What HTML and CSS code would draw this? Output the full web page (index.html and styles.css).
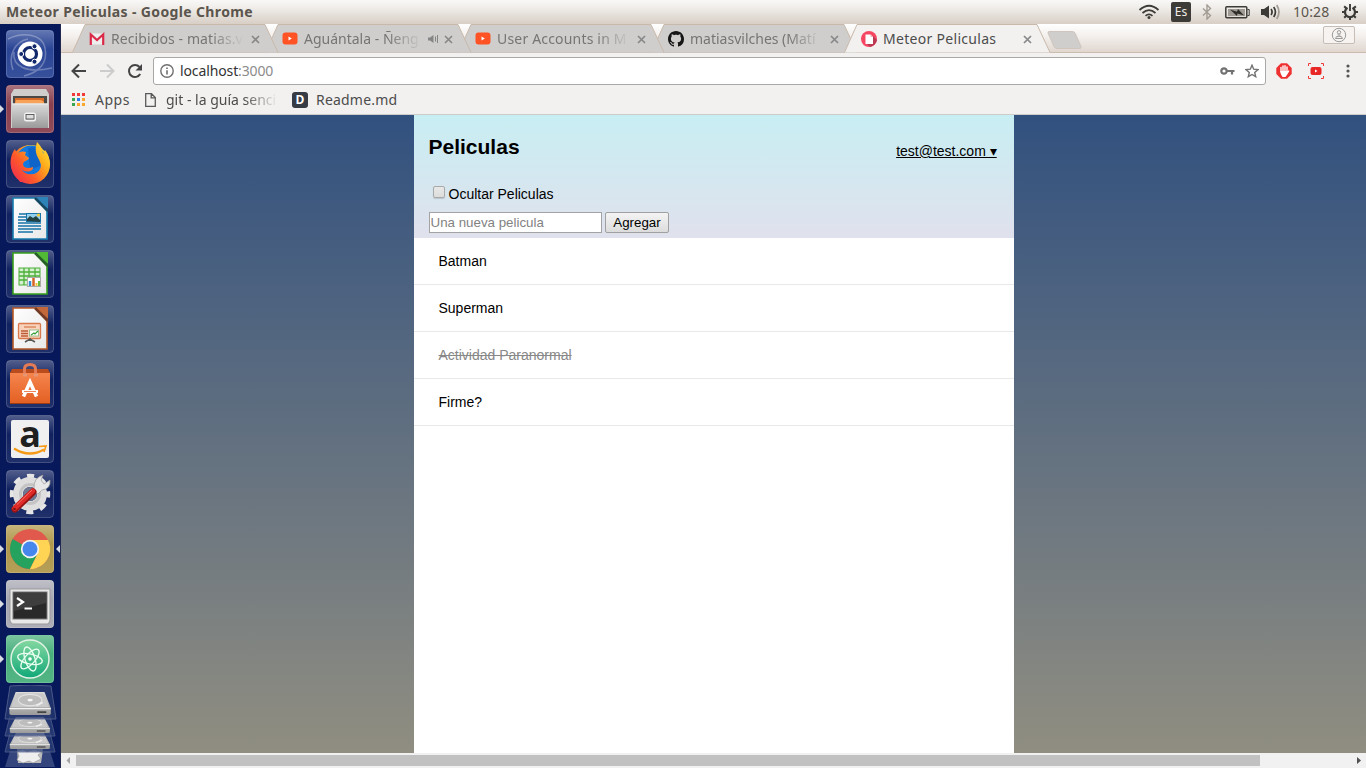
FILE: index.html
```html
<!DOCTYPE html>
<html lang="es">
<head>
<meta charset="utf-8">
<title>Meteor Peliculas</title>
<link rel="stylesheet" href="styles.css">
</head>
<body>
<svg class="defs" width="0" height="0">
  <defs>
    <linearGradient id="glass" x1="0" y1="0" x2="0" y2="1"><stop offset="0" stop-color="#fff" stop-opacity=".3"/><stop offset=".4" stop-color="#fff" stop-opacity=".04"/><stop offset="1" stop-color="#fff" stop-opacity=".1"/></linearGradient>
    <linearGradient id="paper" x1="0" y1="0" x2="1" y2="1"><stop offset="0" stop-color="#fff"/><stop offset="1" stop-color="#e8e8e8"/></linearGradient>
    <linearGradient id="steel" x1="0" y1="0" x2="0" y2="1"><stop offset="0" stop-color="#dcdcdc"/><stop offset="1" stop-color="#9a9a9a"/></linearGradient>
    <linearGradient id="bag" x1="0" y1="0" x2="0" y2="1"><stop offset="0" stop-color="#f5854e"/><stop offset="1" stop-color="#e35f22"/></linearGradient>
    <linearGradient id="fox" x1="1" y1="0" x2="0" y2=".8"><stop offset="0" stop-color="#fff04a"/><stop offset=".35" stop-color="#ffb01c"/><stop offset=".7" stop-color="#ff5a2a"/><stop offset="1" stop-color="#f0304c"/></linearGradient>
    <linearGradient id="atom" x1="0" y1="0" x2="0" y2="1"><stop offset="0" stop-color="#86d8a0"/><stop offset="1" stop-color="#10a878"/></linearGradient>
    <g id="frame"><rect x=".5" y=".5" width="47" height="47" rx="3.5" fill="url(#glass)" stroke="#fff" stroke-opacity=".2"/></g>
    <g id="close"><path d="M1 1l7 7M8 1l-7 7" fill="none" stroke="#888" stroke-width="1.7"/></g>
    <g id="tabshape"><path d="M.5 28.5L13 .5H193L206 28.5"/></g>
    <g id="youtube"><rect x=".5" y="1.500" width="15" height="12" rx="3" fill="#ff5225"/><path d="M6.500 5.500v4L9.800 7.500z" fill="#fff"/></g>
    <g id="drive"><path d="M8 0H40L47 14V19Q47 20 45 20H3Q1 20 1 19V14Z" fill="url(#steel)"/><path d="M9 1H39L45 13H3Z" fill="#c9c9c9"/><ellipse cx="24" cy="7" rx="13" ry="5" fill="#bdbdbd" stroke="#e2e2e2"/><ellipse cx="24" cy="7" rx="3" ry="1.2" fill="#f5f5f5"/><path d="M31 12l7-3" stroke="#eee" stroke-width="1.5"/><path d="M1 14.500H47" stroke="#f2f2f2"/><path d="M32 17.500h10" stroke="#444" stroke-width="1.500"/></g>
  </defs>
</svg>

<div class="desktop">
  <header class="panel">
    <span class="panel-title">Meteor Peliculas - Google Chrome</span>
    <div class="tray">
      <svg class="wifi" width="22" height="16" viewBox="0 0 22 16" fill="none" stroke="#3c3b37" stroke-width="1.7"><path d="M1.500 6Q11-2.500 20.500 6M4.500 9Q11 3.200 17.500 9M7.500 11.800Q11 8.800 14.500 11.800"/><circle cx="11" cy="13.500" r="1.500" fill="#3c3b37" stroke="none"/></svg>
      <span class="lang">Es</span>
      <svg class="bt" width="10" height="16" viewBox="0 0 10 16" fill="none" stroke="#a19b93" stroke-width="1.400"><path d="M1 4.500L8.500 11.500 5 15V1L8.500 4.500 1 11.500"/></svg>
      <svg class="battery" width="25" height="13" viewBox="0 0 25 13"><rect x=".8" y=".8" width="21" height="11" rx="1" fill="none" stroke="#3c3b37" stroke-width="1.500"/><rect x="3" y="3" width="17" height="7" fill="#a09b94"/><path d="M22.500 3.500h1.700v6h-1.700" fill="none" stroke="#3c3b37"/><path d="M5 3.500l7 2.200 1-2.700 6 6.500-6.500-2-.5 2.500z" fill="#2d2c29"/></svg>
      <svg class="volume" width="20" height="16" viewBox="0 0 20 16" fill="none" stroke="#3c3b37" stroke-width="1.700"><path d="M0 5h3L8 1.500v13L3 11H0z" fill="#3c3b37" stroke="none"/><path d="M10 5q2.200 3 0 6M12.700 3q3.500 5 0 10"/><path d="M15.700 1q4.500 7 0 14" stroke="#a19b93"/></svg>
      <span class="clock">10:28</span>
      <svg class="power" width="18" height="18" viewBox="0 0 18 18" fill="none" stroke="#3c3b37"><path d="M6.500 4.800A5 5 0 1 0 11.500 4.800" stroke-width="2.200"/><path d="M9 1v7" stroke-width="1.900"/><path d="M3.200 3.200l2 2M14.800 3.200l-2 2M1 9h3M14 9h3M3.200 14.800l2-2M14.800 14.800l-2-2M9 14v3" stroke-width="2"/></svg>
    </div>
  </header>

  <div class="workspace">
    <nav class="launcher">
      <div class="app dash"><svg width="48" height="48"><g fill="none" stroke="#fff" opacity=".28" stroke-width="1.600"><path d="M2 9C16 2 36 3 39 18 42 32 34 42 18 46"/><path d="M7 40C2 26 8 12 22 9"/><path d="M8 22C6 36 20 44 46 38"/></g><use href="#frame"/><circle cx="24" cy="24" r="12.500" fill="#fff"/><circle cx="24" cy="24" r="6.500" fill="none" stroke="#11296a" stroke-width="3.200"/><g fill="#11296a" stroke="#fff" stroke-width="1"><circle cx="15.200" cy="24" r="2.500"/><circle cx="28.500" cy="16.300" r="2.500"/><circle cx="28.500" cy="31.700" r="2.500"/></g></svg></div>
      <div class="app files running"><svg width="48" height="48"><use href="#frame"/><path d="M8 4H40L43 9V43H5V9Z" fill="#cfcecd"/><path d="M7 11H41V22H7Z" fill="#4b4945"/><path d="M9 13H38V19H9Z" fill="#d96b28"/><path d="M10 15H35L38 17V19H9Z" fill="#f7a45a"/><path d="M6 18.500H42V43H6Z" fill="url(#steel)"/><path d="M6 19H42" stroke="#eee"/><rect x="19" y="28.500" width="10" height="7" rx="1.500" fill="#999" stroke="#f2f2f2" stroke-width="2"/><rect x="20" y="29.500" width="8" height="4.500" fill="#ddd" stroke="#555" stroke-width=".9"/></svg></div>
      <div class="app"><svg width="48" height="48"><use href="#frame"/><circle cx="24.500" cy="24.500" r="19.500" fill="url(#fox)"/><circle cx="25" cy="20" r="14.500" fill="#1479df"/><path d="M22 8q9-3 13 5l-1 13-10 4z" fill="#0a57b9" opacity=".6"/><path d="M9 9L11 14C14 11 17 11 20 12L19 15 23 18C22 21 18 20 17 24 17 28 22 29 27 27 28 31 20 34 15 29 22 39 35 34 35 25 34 18 27 15 31 2 34 5 37 9 37 14L39 10C43 15 45 22 43 29L32 42H14L6 30C3 22 5 14 9 9Z" fill="url(#fox)"/></svg></div>
      <div class="app"><svg width="48" height="48"><use href="#frame"/><path d="M7 3H29L41 16V44H7Z" fill="url(#paper)" stroke="#177cae" stroke-width="1.600"/><path d="M28 2H42V14Z" fill="#2d83b8"/><path d="M29 3L42 16" stroke="#174963" stroke-width="2.500"/><path d="M13 19H20M12 22H20M12 25H20M12 28H35M12 31H35M12 34H35M12 37H27" stroke="#1473a9" stroke-width="1.600"/><rect x="20.500" y="18.500" width="14" height="8" fill="#91cfec" stroke="#1874a7"/><path d="M21 26V24l3-3 3 2 3-2 4 4v2z" fill="#244142"/><circle cx="32.500" cy="20" r="1.500" fill="#ffc82a"/></svg></div>
      <div class="app"><svg width="48" height="48"><use href="#frame"/><path d="M7 3H29L41 16V44H7Z" fill="url(#paper)" stroke="#38a11c" stroke-width="1.600"/><path d="M28 2H42V14Z" fill="#51b936"/><path d="M29 3L42 16" stroke="#286127" stroke-width="2.500"/><rect x="13" y="18" width="21" height="17" fill="#d4f0cf" stroke="#4cae39"/><path d="M13 22H34M13 26H34M13 30H34M18 18V35M23 18V35M29 18V35" stroke="#4cae39" stroke-width="1.300"/><rect x="21.500" y="27.500" width="13" height="9" fill="#fff" stroke="#aaa"/><path d="M24 36V31" stroke="#348dd1" stroke-width="2.500"/><path d="M27.500 36V28" stroke="#d76423" stroke-width="2.500"/><path d="M30.500 36V33" stroke="#f2c337" stroke-width="2"/><path d="M33 36V31" stroke="#6ab83f" stroke-width="2"/></svg></div>
      <div class="app"><svg width="48" height="48"><use href="#frame"/><path d="M7 3H29L41 16V44H7Z" fill="url(#paper)" stroke="#b65825" stroke-width="1.600"/><path d="M28 2H42V14Z" fill="#c3683a"/><path d="M29 3L42 16" stroke="#733b25" stroke-width="2.500"/><rect x="12.500" y="18.500" width="22" height="15" rx="1" fill="#f9d2bb" stroke="#d9794d" stroke-width="1.300"/><path d="M18 22H30" stroke="#cf6637"/><path d="M15 26h7M15 28.500h7M15 31h7" stroke="#ba5d3a" stroke-width="1.300"/><rect x="23.500" y="25" width="9" height="6" fill="#fff" stroke="#9bbf8e"/><path d="M25 30l3-2 1 1 3-3" fill="none" stroke="#3b9f38" stroke-width="1.200"/><path d="M19 37l5-3 5 3M24 33v3" fill="none" stroke="#555" stroke-width="1.500"/></svg></div>
      <div class="app"><svg width="48" height="48"><use href="#frame"/><path d="M6 9H42L44 13V44H4V13Z" fill="#b94b1c"/><path d="M4 13H44V44H4Z" fill="url(#bag)"/><path d="M4 43.500H44" stroke="#9b3c15"/><path d="M18.500 15V9Q18.500 4.500 24 4.500T29.500 9V15" fill="none" stroke="#e47b55" stroke-width="3"/><path d="M17 15h4M28 15h4" stroke="#e99674" stroke-width="3"/><path d="M17.500 36.500L24 22 30.500 36.500" fill="none" stroke="#fff" stroke-width="3.500"/><path d="M16 31.500H32" fill="none" stroke="#fff" stroke-width="3"/><path d="M18 31.500h12" stroke="#e9672c" stroke-width=".8"/></svg></div>
      <div class="app amazon"><svg width="48" height="48"><use href="#frame"/><rect x="5" y="5" width="38" height="38" rx="2" fill="#f0f0f0"/><path d="M8 33.500Q23 43 38 34.500" fill="none" stroke="#f69a16" stroke-width="2.300"/><path d="M33 31.500l7-.5-2 6" fill="none" stroke="#f69a16" stroke-width="1.600"/></svg><span class="amazon-letter">a</span></div>
      <div class="app"><svg width="48" height="48"><use href="#frame"/><circle cx="24" cy="24" r="18" fill="none" stroke="#e6e6e6" stroke-width="4.500" stroke-dasharray="7.070 7.070" stroke-dashoffset="3.530"/><circle cx="24" cy="24" r="12" fill="none" stroke="#dedede" stroke-width="10"/><circle cx="24" cy="24" r="9.500" fill="none" stroke="#c4c4c4" stroke-width="3"/><circle cx="24" cy="24" r="7" fill="#707891"/><path d="M28 19Q27 8 37 5L35 10 38 14 44 10Q45 19 36 20L32 24 27 22Z" fill="#e7e7e7" stroke="#999" stroke-width=".7"/><path d="M9 39L27 22" stroke="#961414" stroke-width="7" stroke-linecap="round"/><path d="M8.700 38.300L26.700 21" stroke="#df2a27" stroke-width="5" stroke-linecap="round"/><path d="M11 34.500L26 20" stroke="#f27669" stroke-width="1"/><circle cx="8.500" cy="39" r="1.300" fill="#7c1616"/></svg></div>
      <div class="app chrome running focused"><svg width="48" height="48"><use href="#frame"/><circle cx="24" cy="24" r="20" fill="#e1584c"/><path d="M24 24L6.700 14A20 20 0 0 0 24 44L32 28Z" fill="#25a35e"/><path d="M24 15H42A20 20 0 0 1 24 44L32 28Z" fill="#ffd454"/><circle cx="24" cy="24" r="9.200" fill="#f2f2f2"/><circle cx="24" cy="24" r="7.500" fill="#4587ed"/></svg></div>
      <div class="app terminal running"><svg width="48" height="48"><use href="#frame"/><path d="M4 9H44V41L42 44H6L4 41Z" fill="#e8e8e8" stroke="#999"/><rect x="7" y="12" width="34" height="27" fill="#292929" stroke="#777"/><path d="M8 13H40V23L8 31Z" fill="#fff" opacity=".1"/><path d="M11 18l6 4-6 4" fill="none" stroke="#fff" stroke-width="2.200"/><path d="M18.500 28.500H26" stroke="#fff" stroke-width="2"/></svg></div>
      <div class="app atom running"><svg width="48" height="48"><use href="#frame"/><circle cx="24" cy="24" r="19" fill="url(#atom)" stroke="#e2f2e6" stroke-width="1.500"/><g fill="none" stroke="#eafff1" stroke-width="1.300" transform="rotate(12 24 24)"><ellipse cx="24" cy="24" rx="12.500" ry="5"/><ellipse cx="24" cy="24" rx="12.500" ry="5" transform="rotate(60 24 24)"/><ellipse cx="24" cy="24" rx="12.500" ry="5" transform="rotate(120 24 24)"/></g><circle cx="24" cy="24" r="1.800" fill="#fff"/></svg></div>
      <svg class="drives" width="60" height="83"><path d="M10 66H50L55 82H5Z" fill="#47598c" opacity=".7"/><path d="M17 64L43 64 41 78 18 78Z" fill="#bdbdbd"/><path d="M17 66l6-2 4 3 7-3 8 3-4 3 3 4-8 4-4-2-6 2-6-3 2-4z" fill="#eee" stroke="#999" stroke-width=".7"/><path d="M10 48H50L55 67H5Z" fill="#2f4279" stroke="#5a6894" opacity=".75"/><g transform="translate(9 48) scale(.87 .8)"><use href="#drive"/></g><path d="M10 31H50L55 51H5Z" fill="#2f4279" stroke="#5a6894" opacity=".75"/><g transform="translate(9 32) scale(.87 .8)"><use href="#drive"/></g><path d="M10 1Q30-1 51 1L56 34H5Z" fill="#26386f" stroke="#5a6894" opacity=".8"/><g transform="translate(8.500 7) scale(.9 1.150)"><use href="#drive"/></g></svg>
    </nav>

    <main class="browser">
      <div class="tabstrip">
        <div class="tab tab-1"><svg class="tab-bg" width="207" height="29"><use href="#tabshape"/></svg><svg width="16" height="16" viewBox="0 0 16 16"><rect x="1" y="2.500" width="14" height="11" fill="#eee"/><path d="M1.800 14V3.500L8 9l6.200-5.500V14" fill="none" stroke="#db2948" stroke-width="2.200"/></svg><span class="tab-title fade">Recibidos - matias.v</span><svg class="x" width="9" height="9"><use href="#close"/></svg></div>
        <div class="tab tab-2"><svg class="tab-bg" width="207" height="29"><use href="#tabshape"/></svg><svg width="16" height="16"><use href="#youtube"/></svg><span class="tab-title fade">Aguántala - Ñeng</span><svg class="audio" width="11" height="10" viewBox="0 0 11 10" fill="none" stroke="#858585"><path d="M0 3.500h2L5.500 1v8L2 6.500H0z" fill="#858585" stroke="none"/><path d="M7.500 2.500v5M9.500 1v8"/></svg><svg class="x" width="9" height="9"><use href="#close"/></svg></div>
        <div class="tab tab-3"><svg class="tab-bg" width="207" height="29"><use href="#tabshape"/></svg><svg width="16" height="16"><use href="#youtube"/></svg><span class="tab-title fade">User Accounts in M</span><svg class="x" width="9" height="9"><use href="#close"/></svg></div>
        <div class="tab tab-4"><svg class="tab-bg" width="207" height="29"><use href="#tabshape"/></svg><svg width="16" height="16" viewBox="0 0 16 16"><path fill="#161616" d="M8 0C3.580 0 0 3.580 0 8c0 3.540 2.290 6.530 5.470 7.590.4.070.55-.17.55-.38 0-.19-.01-.82-.01-1.490-2.010.37-2.530-.49-2.690-.94-.09-.23-.48-.94-.82-1.130-.28-.15-.68-.52-.01-.53.63-.01 1.080.58 1.230.82.72 1.210 1.870.87 2.330.66.07-.52.28-.87.51-1.070-1.780-.2-3.640-.89-3.640-3.950 0-.87.31-1.590.82-2.150-.08-.2-.36-1.020.08-2.120 0 0 .67-.21 2.200.82.640-.18 1.320-.27 2-.27s1.360.09 2 .27c1.530-1.040 2.200-.82 2.200-.82.44 1.100.16 1.920.08 2.120.51.56.82 1.270.82 2.150 0 3.070-1.870 3.750-3.650 3.950.29.25.54.73.54 1.480 0 1.070-.01 1.930-.01 2.200 0 .21.15.46.55.38A8.010 8.010 0 0 0 16 8c0-4.420-3.580-8-8-8z"/></svg><span class="tab-title fade">matiasvilches (Matí</span><svg class="x" width="9" height="9"><use href="#close"/></svg></div>
        <div class="tab tab-5 active"><svg class="tab-bg" width="207" height="29"><use href="#tabshape"/></svg><svg width="16" height="16" viewBox="0 0 16 16"><circle cx="8" cy="8" r="8" fill="#f64762"/><path d="M12 5l4 4q-1 5-7 7L5 12z" fill="#b93b53"/><path d="M4.500 3.500h5L12 6v7H4.500z" fill="#fff"/><path d="M9.500 3.500V6H12z" fill="#e8b5c0"/></svg><span class="tab-title">Meteor Peliculas</span><svg class="x" width="9" height="9"><use href="#close"/></svg></div>
        <svg class="newtab" width="36" height="19"><path d="M2 .5H25.500Q27.500.5 28.300 2.500L34 15.500Q34.700 17.500 32.500 17.500H10Q8 17.500 7 15.500L1.200 2.500Q.5.500 2 .5Z" fill="#cfcecd" stroke="#cfc5bd"/></svg>
        <div class="profile"><svg width="16" height="16" viewBox="0 0 16 16" fill="none" stroke="#9a9a9a"><circle cx="8" cy="8" r="6.700"/><circle cx="8" cy="5.300" r="1.700"/><path d="M6.500 8h3M4.500 11.500q0-2.300 3.500-2.300t3.500 2.300z"/></svg></div>
      </div>

      <div class="toolbar">
        <svg class="nav" width="16" height="16" viewBox="0 0 16 16" fill="none" stroke="#444" stroke-width="2"><path d="M15 8H2.500M8 1.500L1.500 8 8 14.500"/></svg>
        <svg class="nav" width="16" height="16" viewBox="0 0 16 16" fill="none" stroke="#ccc" stroke-width="2"><path d="M1 8h12.500M8 1.500L14.500 8 8 14.500"/></svg>
        <svg class="nav" width="16" height="16" viewBox="0 0 16 16"><path d="M13.200 11A6 6 0 1 1 12.500 4" fill="none" stroke="#444" stroke-width="2"/><path d="M15 1v6.500H8.500z" fill="#444"/></svg>
        <div class="omnibox">
          <svg width="14" height="14" fill="none" stroke="#707070" stroke-width="1.400"><circle cx="7" cy="7" r="6.200"/><path d="M7 6.200v4.300M7 3.500v1.600" stroke-width="1.600"/></svg>
          <span class="url">localhost<i>:3000</i></span>
          <svg class="key" width="15" height="8" viewBox="0 0 15 8"><circle cx="4" cy="4" r="2.700" fill="none" stroke="#717171" stroke-width="2.200"/><path d="M7 4h7.500M12 4v3.500" fill="none" stroke="#717171" stroke-width="2.200"/></svg>
          <svg width="14" height="14" viewBox="0 0 14 14"><path d="M7 1.200l1.700 4 4.300.4-3.300 2.900 1 4.200L7 10.500l-3.700 2.200 1-4.200L1 5.600l4.300-.4z" fill="none" stroke="#717171" stroke-width="1.400"/></svg>
        </div>
        <svg class="ext" width="16" height="16" viewBox="0 0 16 16"><path d="M5 .3h6L15.700 5v6L11 15.700H5L.3 11V5z" fill="#ef3030"/><path d="M5 4.500V9M7 3V8M9 2.700V8M11 4V9M12.700 8L10.500 11.500" stroke="#fff" stroke-width="1.400" stroke-linecap="round"/><path d="M4.300 8H11.700L10.500 12.500 9.500 14H6.500Q4.300 11.500 4.300 8z" fill="#fff"/></svg>
        <svg class="ext" width="16" height="16" viewBox="0 0 16 16"><path d="M.5 3V.5H3M13 .5h2.500V3M15.500 13v2.500H13M3 15.500H.5V13" fill="none" stroke="#ed3b3b"/><rect x="2.500" y="4" width="11" height="8" rx="2" fill="#e82626"/><path d="M7 6.500v3L9.500 8z" fill="#fff"/></svg>
        <svg class="menu" width="4" height="14" fill="#555"><circle cx="2" cy="2" r="1.600"/><circle cx="2" cy="7" r="1.600"/><circle cx="2" cy="12" r="1.600"/></svg>
      </div>

      <div class="bookmarks">
        <svg width="13" height="13"><path fill="#f03a3a" d="M0 0h3v3H0zM5 0h3v3H5zM10 0h3v3h-3z"/><path fill="#36a852" d="M0 5h3v3H0zM0 10h3v3H0z"/><path fill="#2d7de9" d="M5 5h3v3H5z"/><path fill="#fba62d" d="M10 5h3v3h-3zM5 10h3v3H5zM10 10h3v3h-3z"/></svg>
        <span class="bm bm-apps">Apps</span>
        <svg width="11" height="14" fill="none" stroke="#5a5a5a" stroke-width="1.300"><path d="M.7.700H6.500L10.300 4.500V13.300H.7zM6.200.700V4.800H10.300"/></svg>
        <span class="bm bm-git fade">git - la guía senci</span>
        <span class="d-icon">D</span>
        <span class="bm bm-readme">Readme.md</span>
      </div>

      <section class="page">
        <div class="container">
          <div class="app-header">
            <div class="login">test@test.com ▾</div>
            <h1>Peliculas</h1>
            <label class="hide"><span class="check"></span>Ocultar Peliculas</label>
            <form class="new-movie"><input class="field" type="text" placeholder="Una nueva pelicula"><button class="add" type="button">Agregar</button></form>
          </div>
          <ul class="movies">
            <li>Batman</li>
            <li>Superman</li>
            <li class="checked"><span>Actividad Paranormal</span></li>
            <li>Firme?</li>
          </ul>
        </div>
      </section>

      <div class="scrollbar">
        <svg width="15" height="15"><path d="M9 4v7L5.500 7.500z" fill="#a3a3a3"/></svg>
        <div class="track"><div class="thumb"></div></div>
        <svg width="15" height="15"><path d="M6 4v7l4-3.500z" fill="#505050"/></svg>
      </div>
    </main>
  </div>
</div>
</body>
</html>
```
FILE: styles.css
```css
* { box-sizing: border-box; }
body { margin: 0; width: 1366px; height: 768px; overflow: hidden; font-family: "Noto Sans", sans-serif; }
svg { display: block; flex: none; }
.defs { position: absolute; }
.desktop { display: flex; flex-direction: column; height: 768px; }

.panel { height: 24px; flex: none; display: flex; justify-content: space-between; align-items: center; padding: 0 7px 0 6px; background: linear-gradient(#f9f8f7, #f2f0ed 25%, #d8cfc6); }
.panel-title { margin-top: -2px; font-size: 14px; font-weight: 700; letter-spacing: .37px; color: #5b554d; white-space: nowrap; }
.tray { display: flex; align-items: center; height: 24px; }
.lang { width: 20px; height: 20px; margin-left: 11px; border-radius: 2px; background: #3c3b37; color: #f0ede8; font-size: 12px; line-height: 20px; text-align: center; }
.bt { margin-left: 11px; }
.battery { margin-left: 13px; }
.volume { margin-left: 11px; }
.clock { width: 37px; margin: -2px 11px 0 12px; font-size: 14px; letter-spacing: .1px; color: #5b554d; white-space: nowrap; }

.workspace { flex: 1; display: flex; min-height: 0; }
.launcher { width: 61px; flex: none; padding: 6px 0 0 6px; display: flex; flex-direction: column; gap: 7px; overflow: hidden; background: #07195a; border-right: 1px solid #21284f; }
.app { position: relative; width: 48px; height: 48px; flex: none; border-radius: 4px; }
.dash { background: #213d91; }
.files { background: #843747; }
.chrome { background: #ad9444; }
.terminal { background: #a4a4b0; }
.atom { background: #40ac76; }
.running::before { content: ""; position: absolute; left: -6px; top: 20px; border: 4px solid transparent; border-left-color: #d9dde3; border-right: 0; }
.focused::after { content: ""; position: absolute; left: 50px; top: 20px; border: 4px solid transparent; border-right-color: #d9dde3; border-left: 0; }
.amazon-letter { position: absolute; left: 0; top: 0; width: 48px; text-align: center; font: bold 36px/38px "Open Sans", sans-serif; color: #202020; }
.drives { margin: -5px 0 0 -6px; }

.browser { flex: 1; min-width: 0; display: flex; flex-direction: column; }
.tabstrip { height: 29px; flex: none; display: flex; padding-left: 11px; background: linear-gradient(#fff, #f3efec 45%, #e0d7cf); border-bottom: 1px solid #cbbcae; }
.tab { position: relative; width: 207px; height: 29px; flex: none; margin-right: -14px; padding: 1px 0 0 17px; display: flex; align-items: center; color: #777574; }
.tab > * { position: relative; }
.tab .tab-bg { position: absolute; left: 0; top: 0; fill: #cfcecd; stroke: #c9b9aa; stroke-width: 1; }
.tab-1 { z-index: 4; }
.tab-2 { z-index: 3; }
.tab-3 { z-index: 2; }
.tab-4 { z-index: 1; }
.active { z-index: 5; color: #4c4c4c; }
.active .tab-bg { fill: #f2f1f0; }
.tab-title { width: 133px; margin: -1px 0 0 6px; font-size: 14px; line-height: 20px; white-space: nowrap; }
.tab-1 .tab-title { letter-spacing: .1px; }
.tab-2 .tab-title { width: 118px; margin-right: 6px; }
.tab-3 .tab-title { letter-spacing: .18px; }
.tab-5 .tab-title { letter-spacing: .3px; }
.fade { -webkit-mask-image: linear-gradient(to right, #000 calc(100% - 34px), transparent); mask-image: linear-gradient(to right, #000 calc(100% - 34px), transparent); }
.x { margin-left: 7px; }
.tab-2 .x { margin-left: 5px; }
.newtab { margin: 7px 0 0 10px; }
.profile { width: 32px; height: 18px; margin: 2px 11px 0 auto; border: 1px solid #c5bdb6; border-radius: 2px; display: flex; justify-content: center; background: #f6f3f1; }

.toolbar { height: 35px; flex: none; display: flex; align-items: center; padding: 0 0 0 10px; background: #f2f1f0; }
.nav { margin-right: 12px; }
.omnibox { width: 1113px; height: 28px; flex: none; margin: 1px 10px 0 -2px; padding: 0 6px; display: flex; align-items: center; background: #fff; border: 1px solid #aaa8a6; border-radius: 3px; }
.url { flex: 1; margin: -2px 0 0 6px; font-size: 14px; letter-spacing: -.12px; color: #333; }
.url i { font-style: normal; color: #8c8c8c; }
.key { margin-right: 10px; }
.ext { margin-right: 16px; }
.menu { margin-left: 6px; }

.bookmarks { height: 27px; flex: none; display: flex; align-items: center; padding: 0 0 3px 11px; background: #f2f1f0; border-bottom: 1px solid #cfcdcb; }
.bm { font-size: 14px; line-height: 20px; color: #4c4c4c; white-space: nowrap; }
.bm-apps { width: 36px; margin: 0 14px 0 10px; letter-spacing: .5px; }
.bm-git { width: 112px; margin: 0 14px 0 10px; }
.d-icon { width: 16px; height: 16px; border-radius: 3px; background: #363b46; color: #fff; font: bold 12px/16px "Open Sans", sans-serif; text-align: center; }
.bm-readme { margin-left: 8px; letter-spacing: .2px; }

.page { flex: 1; min-height: 0; background: linear-gradient(#32517f, #908e81); font: 14px/16px "Liberation Sans", Arial, sans-serif; color: #000; }
.container { width: 600px; height: 100%; margin-left: 353px; background: #fff; }
.app-header { height: 123px; padding: 20px 15px 0 14.500px; background: linear-gradient(#c8eef3, #e0e1ed); }
.app-header h1 { margin: 0; font-size: 21px; line-height: 24px; }
.login { float: right; margin: 8px 2.300px 0 0; text-decoration: underline; }
.hide { display: flex; align-items: center; height: 16px; margin-top: 27px; }
.check { width: 12px; height: 12px; margin: -4px 4px 0 4px; border: 1px solid #a9a9a9; border-radius: 2px; background: linear-gradient(#e8e8e8, #dcdcdc); box-shadow: 0 1px 1px rgba(0,0,0,.15); }
.new-movie { margin: 10px 0 0; display: flex; gap: 3px; }
.field { width: 173px; height: 21px; padding: 1px; border: 1px solid #a3a3a3; font: 13.333px "Liberation Sans", Arial, sans-serif; background: #fff; }
.field::placeholder { color: #828282; }
.add { width: 64px; height: 21px; padding: 0 0 0 1px; border: 1px solid #a0a0a0; border-radius: 2px; background: linear-gradient(#f4f4f4, #dcdcdc); color: #000; font: 13.333px "Liberation Sans", Arial, sans-serif; }
.movies { margin: 0; padding: 0; list-style: none; }
.movies li { height: 47px; padding: 15px 24.500px; border-bottom: 1px solid #e9e9e9; }
.checked { color: #888; }
.checked span { text-decoration: line-through; }

.scrollbar { height: 15px; flex: none; display: flex; background: #f1f1f1; }
.track { flex: 1; padding-top: 2px; }
.thumb { width: 1184px; height: 11px; background: #c1c1c1; }
```
